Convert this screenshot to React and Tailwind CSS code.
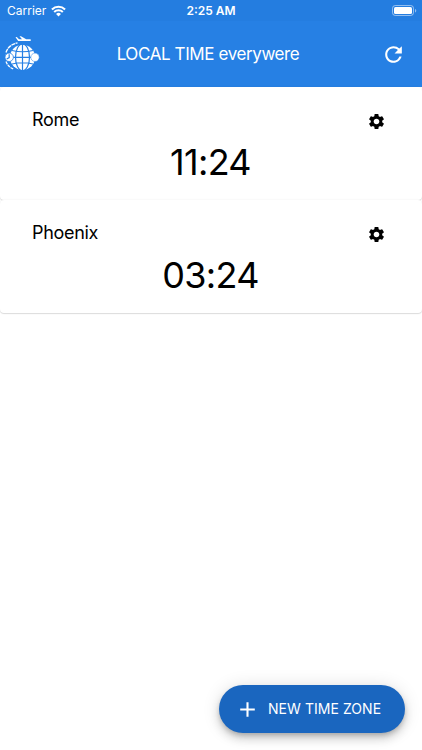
import React from "react";
import { MdAdd, MdRefresh, MdSettings } from "react-icons/md";

const zones = [
  { id: 1, city: "Rome", time: "11:24" },
  { id: 2, city: "Phoenix", time: "03:24" },
];

const WifiIcon = () => (
  <svg width="15" height="12" viewBox="0 0 16 12" fill="none" stroke="white" strokeWidth="2.2">
    <path d="M1 4.3a10 10 0 0 1 14 0" />
    <path d="M3.4 7a6.6 6.6 0 0 1 9.2 0" />
    <path d="M8 11.8 5.4 9.2a3.7 3.7 0 0 1 5.2 0z" fill="white" stroke="none" />
  </svg>
);

const BatteryIcon = () => (
  <svg width="26" height="12" viewBox="0 0 26 12">
    <rect x="1.5" y="0.5" width="21" height="10" rx="2.8" fill="none" stroke="white" strokeOpacity="0.5" />
    <rect x="3" y="2" width="18" height="7" rx="1.5" fill="white" />
    <path d="M24 4v3.4c.8-.3 1.3-1 1.3-1.7S24.8 4.3 24 4z" fill="white" fillOpacity="0.5" />
  </svg>
);

// globe with a plane on top and two small clocks on the sides
const Logo = () => (
  <svg width="36" height="36" viewBox="0 0 36 36" fill="none">
    <circle cx="17.5" cy="21.3" r="12.6" fill="white" />
    <g stroke="#2680e4" strokeWidth="1.2">
      <path d="M17.5 8v27M5 21.3h25M7 14.5q10.500 2.500 21 0M7 28q10.500-2.500 21 0" />
      <ellipse cx="17.5" cy="21.3" rx="7" ry="13.5" />
    </g>
    <circle cx="4.2" cy="21.3" r="4.2" fill="white" stroke="#2680e4" strokeWidth="0.8" />
    <path d="M4.2 18.300v3.300l-2.500 1.500" stroke="#2680e4" strokeWidth="1.2" />
    <circle cx="30" cy="21.3" r="4.2" fill="white" stroke="#2680e4" strokeWidth="0.5" />
    <path d="M1 16.5C2.500 11.500 6.500 8.200 12.500 6.800" stroke="white" strokeWidth="1.3" strokeDasharray="4 0.6" />
    <path d="M1 25.5c1.500 4 4 6.200 7.500 7.500" stroke="white" strokeWidth="1.3" strokeDasharray="3 0.8" />
    <path
      d="M10.500 1.200l1.300-.2 2.200 2.200h3L14.500.3H16l5.200 3H25c1.300 0 1.300 1.700 0 1.700H13.200z"
      fill="white"
    />
  </svg>
);

const ZoneCard = ({ zone }) => (
  <div className="h-[113px] rounded-[4px] bg-white px-8 pt-[21px] shadow-[0_1px_1px_rgba(0,0,0,0.12),0_0_2px_rgba(0,0,0,0.08)]">
    <div className="flex items-center justify-between pr-1">
      <h2 className="text-[18px] leading-6 tracking-[-0.3px]">{zone.city}</h2>
      <button className="pt-[2px]">
        <MdSettings size={19} />
      </button>
    </div>
    <p className="mt-[8px] pr-[1px] text-center text-[36px] leading-[44px] tracking-[-0.7px]">{zone.time}</p>
  </div>
);

const App = () => {
  return (
    <div className="flex h-[750px] w-[422px] flex-col overflow-hidden bg-white font-['Inter',sans-serif] text-black">
      <header className="h-[87px] shrink-0 bg-[#2680e4] text-white">
        <div className="grid h-[21px] grid-cols-3 items-center bg-[#247de0] pr-[5px] pl-[7px]">
          <div className="flex items-center gap-[5px] text-[12px]">
            <span>Carrier</span>
            <WifiIcon />
          </div>
          <span className="pr-[2px] text-center text-[12px] font-semibold">2:25 AM</span>
          <div className="flex justify-end">
            <BatteryIcon />
          </div>
        </div>
        <div className="flex h-[66px] items-center justify-between pr-4 pl-[5px]">
          <Logo />
          <h1 className="pt-[2px] pr-[6px] text-[17px] tracking-[-0.4px]">LOCAL TIME everywere</h1>
          <button>
            <MdRefresh size={25} />
          </button>
        </div>
      </header>

      <main className="flex-1">
        {zones.map((zone) => (
          <ZoneCard key={zone.id} zone={zone} />
        ))}
      </main>

      <div className="flex justify-end pr-[17px] pb-[17px]">
        <button className="flex h-[48px] w-[186px] items-center rounded-full bg-[#1a66bf] pl-4 text-white shadow-[0_3px_5px_-1px_rgba(0,0,0,0.2),0_6px_10px_rgba(0,0,0,0.14),0_1px_18px_rgba(0,0,0,0.12)]">
          <MdAdd size={25} />
          <span className="ml-2 pb-px text-[14px] tracking-[0.05px]">NEW TIME ZONE</span>
        </button>
      </div>
    </div>
  );
};

export default App;
